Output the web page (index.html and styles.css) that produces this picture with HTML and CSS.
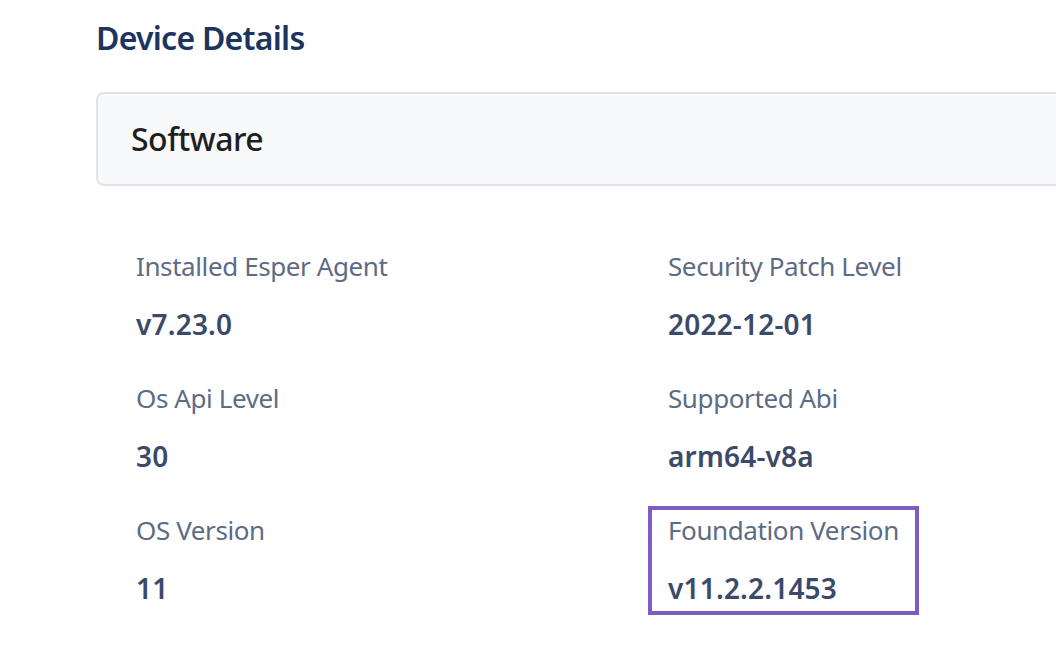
FILE: index.html
```html
<!DOCTYPE html>
<html lang="en">
<head>
<meta charset="utf-8">
<title>Device Details</title>
<link rel="stylesheet" href="styles.css">
</head>
<body>
<main class="page">
  <h1 class="title">Device Details</h1>
  <section class="panel">
    <h2 class="panel-title">Software</h2>
  </section>
  <dl class="details">
    <div class="item">
      <dt class="label">Installed Esper Agent</dt>
      <dd class="value">v7.23.0</dd>
    </div>
    <div class="item">
      <dt class="label">Security Patch Level</dt>
      <dd class="value">2022-12-01</dd>
    </div>
    <div class="item">
      <dt class="label">Os Api Level</dt>
      <dd class="value">30</dd>
    </div>
    <div class="item">
      <dt class="label">Supported Abi</dt>
      <dd class="value">arm64-v8a</dd>
    </div>
    <div class="item">
      <dt class="label">OS Version</dt>
      <dd class="value">11</dd>
    </div>
    <div class="item item-highlight">
      <dt class="label">Foundation Version</dt>
      <dd class="value">v11.2.2.1453</dd>
    </div>
  </dl>
</main>
</body>
</html>
```

FILE: styles.css
```css
html, body {
  margin: 0;
  padding: 0;
  background: #ffffff;
  overflow: hidden;
}

body {
  font-family: "Noto Sans", "Open Sans", sans-serif;
  width: 1056px;
  height: 664px;
}

.page {
  padding: 18px 0 0 96px;
  width: 960px;
}

.title {
  margin: 0;
  font-size: 32px;
  line-height: 40px;
  font-weight: 600;
  letter-spacing: -0.75px;
  color: #1d3461;
}

.panel {
  margin-top: 34px;
  border: 2px solid #e3e4e9;
  border-right: none;
  border-radius: 8px 0 0 8px;
  background: #f8f9fb;
  padding: 25px 33px 25px;
}

.panel-title {
  margin: 0;
  font-size: 32px;
  line-height: 40px;
  font-weight: 500;
  letter-spacing: -0.5px;
  color: #1f1f21;
}

.details {
  margin: 64px 0 0 40px;
  padding: 0;
  display: grid;
  grid-template-columns: 532px 388px;
  row-gap: 40px;
}

.item {
  display: flex;
  flex-direction: column;
  gap: 24px;
}

.label {
  margin: 0;
  font-size: 26px;
  line-height: 32px;
  letter-spacing: -0.4px;
  color: #5d6b85;
}

.value {
  margin: 0;
  font-size: 28px;
  line-height: 36px;
  font-weight: 600;
  letter-spacing: 0.2px;
  color: #3b4a68;
}

.item-highlight {
  position: relative;
  justify-self: start;
}

.item-highlight::after {
  content: "";
  position: absolute;
  top: -8px;
  left: -20px;
  width: 263px;
  height: 101px;
  border: 4px solid #7b5dc4;
}
```
